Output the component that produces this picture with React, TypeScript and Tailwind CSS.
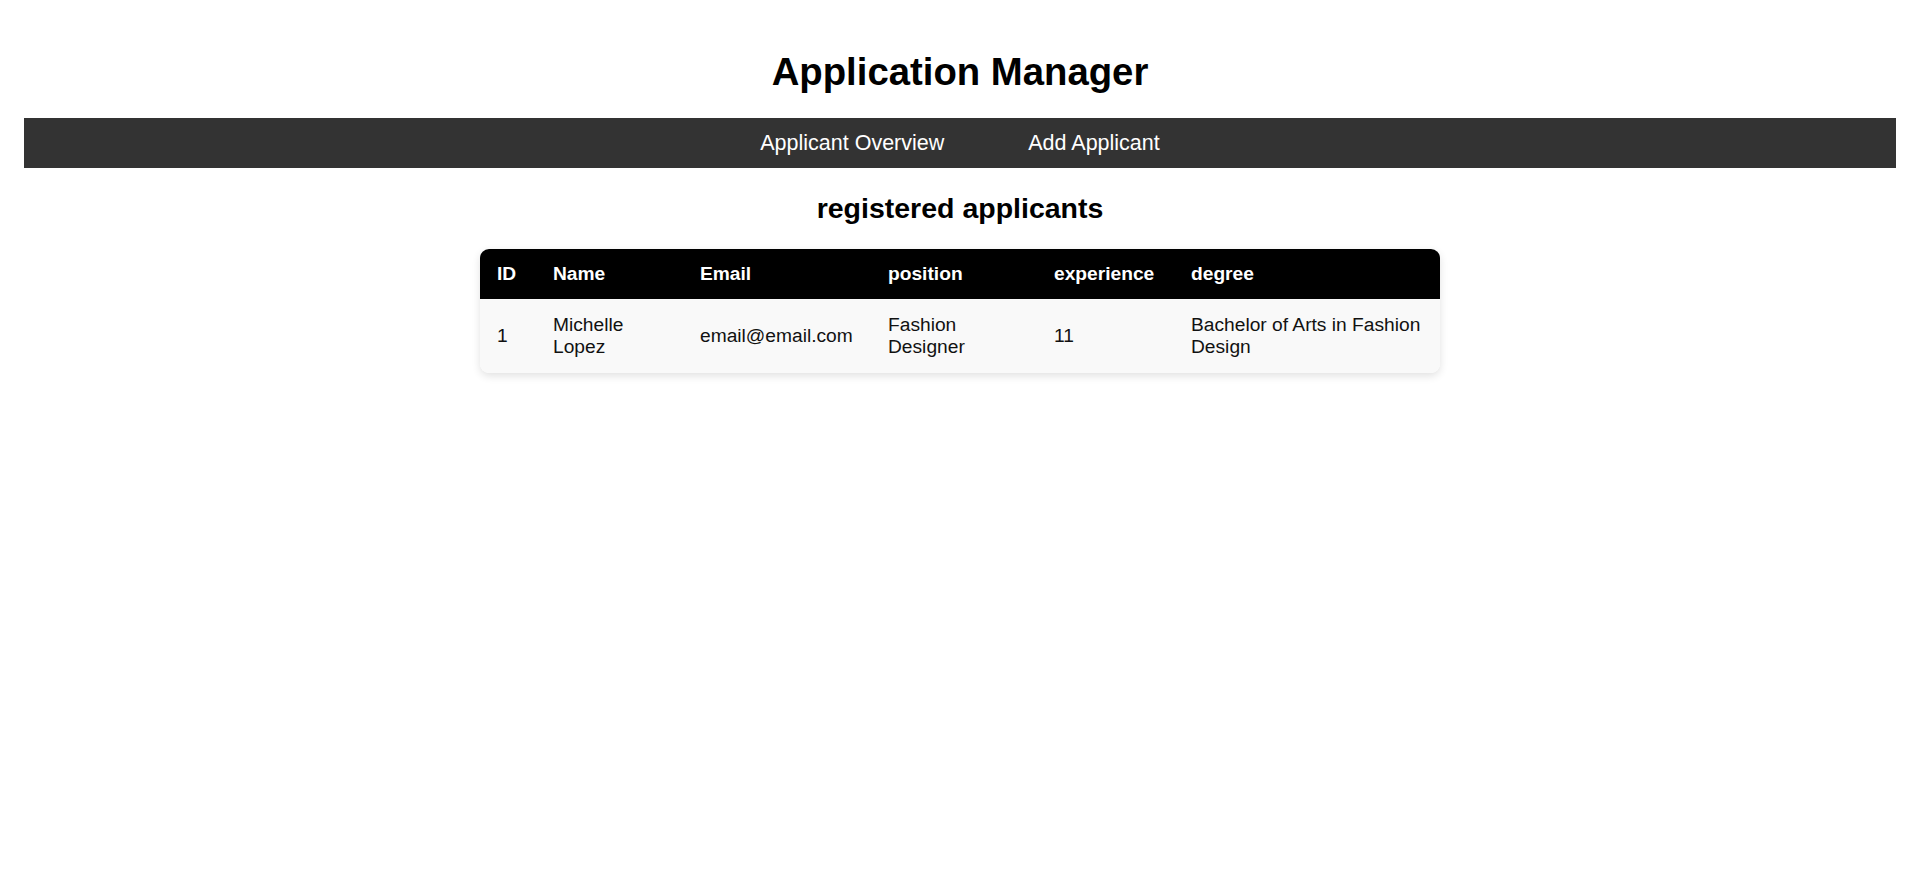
import React from "react";

const cols = [
  { label: "ID", w: "w-[56px]" },
  { label: "Name", w: "w-[147px]" },
  { label: "Email", w: "w-[188px]" },
  { label: "position", w: "w-[166px]" },
  { label: "experience", w: "w-[137px]" },
  { label: "degree", w: "w-[266px]" },
];

const rows = [
  {
    id: "1",
    name: "Michelle Lopez",
    email: "email@email.com",
    position: "Fashion Designer",
    experience: "11",
    degree: "Bachelor of Arts in Fashion Design",
  },
];

export default function App() {
  return (
    <div
      className="flex min-h-screen flex-col bg-white px-[24px] pt-[50px] text-black"
      style={{ fontFamily: '"Liberation Sans", Arial, sans-serif' }}
    >
      <h1 className="mb-[24px] text-center text-[38.3px] font-bold leading-[44px]">
        Application Manager
      </h1>
      <nav className="flex h-[50px] items-center justify-center gap-[84px] bg-[#333333] text-[21.5px] text-white">
        <a className="cursor-pointer">Applicant Overview</a>
        <a className="cursor-pointer">Add Applicant</a>
      </nav>
      <h2 className="mt-[24px] mb-[25px] text-center text-[28.5px] font-bold leading-[32px]">
        registered applicants
      </h2>
      <div className="mx-auto w-[960px] overflow-hidden rounded-[9px] shadow-[0_3px_8px_rgba(0,0,0,0.12)]">
        <table className="w-full table-fixed border-collapse text-left text-[19.2px] leading-[22px]">
          <colgroup>
            {cols.map((c) => (
              <col key={c.label} className={c.w} />
            ))}
          </colgroup>
          <thead>
            <tr className="bg-black text-white">
              {cols.map((c) => (
                <th key={c.label} className="px-[17px] py-[14px] font-bold">
                  {c.label}
                </th>
              ))}
            </tr>
          </thead>
          <tbody>
            {rows.map((r) => (
              <tr key={r.id} className="bg-[#f9f9f9] text-[#111]">
                <td className="px-[17px] py-[15px]">{r.id}</td>
                <td className="px-[17px] py-[15px]">{r.name}</td>
                <td className="whitespace-nowrap px-[17px] py-[15px]">{r.email}</td>
                <td className="px-[17px] py-[15px]">{r.position}</td>
                <td className="px-[17px] py-[15px]">{r.experience}</td>
                <td className="px-[17px] py-[15px]">{r.degree}</td>
              </tr>
            ))}
          </tbody>
        </table>
      </div>
    </div>
  );
}
